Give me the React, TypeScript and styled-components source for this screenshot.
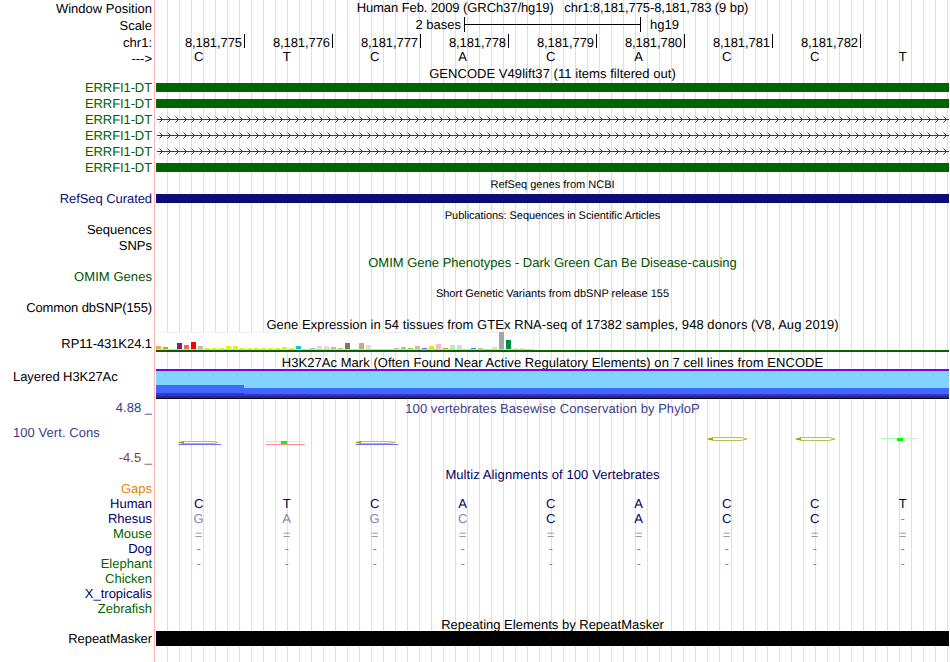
import React from "react";
import styled, { createGlobalStyle } from "styled-components";

const GlobalStyle = createGlobalStyle`
  * { box-sizing: border-box; }
  body { margin: 0; background: #fff; }
`;

const INK = "#000000";
const GREEN = "#006400";
const NAVY = "#0c0c78";
const DEEP = "#000064";
const SLATE = "#3c3c8c";

const Browser = styled.main`
  width: 949px;
  height: 662px;
  overflow: hidden;
  display: grid;
  grid-template-columns: 154px 795px;
  font: 13px/15px "Liberation Sans", Arial, sans-serif;
  color: ${INK};
  text-rendering: geometricPrecision;
`;

const Labels = styled.div`
  display: flex;
  flex-direction: column;
`;

const Tracks = styled.div`
  display: flex;
  flex-direction: column;
  border-left: 1px solid #ffb4b4;
  padding-left: 1px;
  background: repeating-linear-gradient(to right, #dcdcfa 0 1px, transparent 1px 12px) 12px 0 no-repeat;
`;

const Label = styled.div<{ $h: number; $pad?: number; $color?: string; $left?: boolean; $ls?: number }>`
  flex: none;
  height: ${(p) => p.$h}px;
  padding: ${(p) => p.$pad ?? 0}px 2px 0 13px;
  text-align: ${(p) => (p.$left ? "left" : "right")};
  color: ${(p) => p.$color ?? INK};
  letter-spacing: ${(p) => p.$ls ?? 0}px;
  white-space: pre;
`;

const Row = styled.div<{ $h: number; $pad?: number }>`
  flex: none;
  height: ${(p) => p.$h}px;
  padding-top: ${(p) => p.$pad ?? 0}px;
`;

const Title = styled(Row)<{ $color?: string; $ls?: number; $small?: boolean }>`
  text-align: center;
  white-space: pre;
  color: ${(p) => p.$color ?? INK};
  letter-spacing: ${(p) => p.$ls ?? 0}px;
  font-size: ${(p) => (p.$small ? 11 : 13)}px;
`;

const ScaleRow = styled(Row)`
  display: flex;
`;

const ScaleStart = styled.span`
  width: 305px;
  text-align: right;
  margin-right: 3px;
`;

const ScaleBar = styled.span`
  width: 177px;
  height: 15px;
  border: solid #000;
  border-width: 0 1px;
  background: linear-gradient(#000, #000) 0 7px / 100% 1px no-repeat;
  margin-right: 9px;
`;

const Ruler = styled(Row)`
  display: flex;
`;

const Tick = styled.span`
  flex: none;
  width: 88px;
  height: 14px;
  padding-right: 2px;
  text-align: right;
  line-height: 17px;
  letter-spacing: -0.08px;
  border-right: 1px solid #000;
  &:first-child { width: 89px; }
`;

const Bases = styled(Row)<{ $color?: string }>`
  display: grid;
  grid-template-columns: repeat(9, 88px);
  margin-left: -1.4px;
  text-align: center;
  color: ${(p) => p.$color ?? INK};
`;

const Base = styled.span<{ $dim?: boolean }>`
  color: ${(p) => (p.$dim ? "#8282b4" : "inherit")};
`;

const Block = styled.div<{ $h: number; $color: string }>`
  height: ${(p) => p.$h}px;
  background: ${(p) => p.$color};
`;

const Drawing = styled.svg`
  display: block;
  flex: none;
`;

const Expression = styled.div`
  flex: none;
  width: 378px;
  height: 18px;
  padding-right: 1px;
  display: grid;
  grid-template-columns: repeat(54, 5px);
  column-gap: 2px;
  align-items: end;
  background: #fff;
  border: solid #f0f0f0;
  border-width: 1px 1px 1px 0;
  border-bottom-color: #d2d2d2;
`;

const Tissue = styled.span<{ $h: number; $color: string }>`
  height: ${(p) => p.$h}px;
  margin-top: -1px;
  background: ${(p) => p.$color};
`;

const TAN = "#cdb79e";
const YEL = "#eeee00";
const PNK = "#eed5d2";
const NONE: [number, string] = [0, "#fff"];
const tissues: [number, string][] = [
  [3, "#ffa54f"], [2, "#ee9a00"], NONE, [6, "#8b1c62"], [4, "#ee6a50"], [7, "#ff0000"], [3, TAN],
  [1, YEL], [1, YEL], [1, YEL], [3, YEL], [3, YEL], [1, YEL], [1, YEL], [1, YEL], [1, YEL], [1, YEL], [1, YEL],
  [2, YEL], [1, YEL], [3, "#00cdcd"], NONE, [1, "#9ac0cd"], [3, PNK], [3, PNK], [2, TAN], [1, TAN],
  [6, "#8b7355"], NONE, [6, "#cdaa7d"], [4, PNK], NONE, NONE, NONE, [1, TAN], [2, TAN], [1, "#9acd32"],
  [3, TAN], [1, "#7a67ee"], [3, "#ffd700"], [5, "#ffb6c1"], [1, "#cd9b1d"], [4, "#b4eeb4"], [4, "#d9d9d9"],
  NONE, [1, "#1e90ff"], [1, TAN], NONE, [2, "#ffd39b"], [17, "#a6a6a6"], [9, "#008b45"], [1, PNK], [1, PNK], NONE,
];

const Arrows = ({ id }: { id: string }) => (
  <Drawing width="793" height="16" shapeRendering="crispEdges">
    <defs>
      <pattern id={id} x="3" width="8" height="16" patternUnits="userSpaceOnUse">
        <path d="M1 6h1v1h-1zM2 7h1v1h-1zM1 10h1v1h-1zM2 9h1v1h-1z" fill={GREEN} />
        <path d="M0 5h1v1h-1zM0 11h1v1h-1z" fill="#78aa78" />
      </pattern>
    </defs>
    <rect x="1" y="8" width="792" height="1" fill={GREEN} />
    <rect width="793" height="16" fill={`url(#${id})`} />
  </Drawing>
);

const FlatC = ({ x, y, half = 1.5 }: { x: number; y: number; half?: number }) => (
  <g>
    <path
      d={`M${x + 40} ${y}L${x + 34} ${y - half}H${x + 7}L${x + 1} ${y}L${x + 7} ${y + half}H${x + 34}L${x + 40} ${y}`}
      fill="#fff"
      stroke="#b4b43c"
      strokeWidth=".9"
    />
    <path d={`M${x} ${y}l6-1.6v3.2z`} fill="#a0a000" />
  </g>
);

const Conservation = () => (
  <Drawing width="793" height="52">
    <FlatC x={22} y={27.5} half={1} />
    <path d="M22.5 29.5h42.5" stroke="#6e6eff" />
    <FlatC x={199} y={27.5} half={1} />
    <path d="M199.5 29.5h42.5" stroke="#6e6eff" />
    <path d="M110 26.5h37" stroke="#b4ffb4" />
    <path d="M110 29.5h39" stroke="#ff8c8c" />
    <rect x="125" y="26" width="6" height="3" fill="#00ff00" />
    <FlatC x={551} y={24} />
    <FlatC x={639} y={24} />
    <path d="M725 23.5h37" stroke="#b4ffb4" />
    <rect x="741" y="23" width="6" height="3" fill="#00ff00" />
  </Drawing>
);

const Acetylation = () => (
  <Drawing width="793" height="30" shapeRendering="crispEdges">
    <rect width="793" height="30" fill="#80d4ff" />
    <rect width="793" height="2" fill="#7d00f0" />
    <path d="M0 16h88v3h705v6H0z" fill="#4169ff" />
    <path d="M0 24h88v1h705v2H0z" fill="#3c32d2" />
    <rect y="27" width="793" height="2" fill="#1e289b" />
    <rect y="29" width="793" height="1" fill="#000014" />
  </Drawing>
);

const positions = [775, 776, 777, 778, 779, 780, 781, 782].map((n) => `8,181,${n}`);
const species: [string, string][] = [
  ["Gaps", "#e68200"], ["Human", DEEP], ["Rhesus", DEEP], ["Mouse", GREEN], ["Dog", DEEP],
  ["Elephant", GREEN], ["Chicken", GREEN], ["X_tropicalis", DEEP], ["Zebrafish", GREEN],
];
const alignment = [
  { bases: "CTCACACCT", dim: 0 },
  { bases: "GAGCCACC-", dim: 4, lastDim: true },
  { bases: "=========", dim: 9, pad: 1 },
  { bases: "---------", dim: 9 },
  { bases: "---------", dim: 9 },
];

export default function App() {
  return (
    <>
      <GlobalStyle />
      <Browser>
        <Labels>
          <Label $h={16} $pad={1}>Window Position</Label>
          <Label $h={18} $pad={2}>Scale</Label>
          <Label $h={16} $pad={1}>chr1:</Label>
          <Label $h={29} $pad={1}>---&gt;</Label>
          {[0, 1, 2, 3, 4, 5].map((i) => (
            <Label key={i} $h={16} $pad={1} $color={GREEN} $ls={-0.1}>ERRFI1-DT</Label>
          ))}
          <Label $h={31} $pad={16} $color={NAVY} $ls={-0.07}>RefSeq Curated</Label>
          <Label $h={32} $pad={16}>Sequences</Label>
          <Label $h={16}>SNPs</Label>
          <Label $h={31} $pad={15} $color="#005000" $ls={0.06}>OMIM Genes</Label>
          <Label $h={31} $pad={15} $ls={-0.12}>Common dbSNP(155)</Label>
          <Label $h={40} $pad={20} $ls={-0.07}>RP11-431K24.1</Label>
          <Label $h={44} $pad={13} $left $ls={-0.06}>Layered H3K27Ac</Label>
          <Label $h={25} $color={SLATE}>4.88 _</Label>
          <Label $h={25} $color={SLATE} $left $ls={0.06}>100 Vert. Cons</Label>
          <Label $h={31} $color="#8c3c3c">-4.5 _</Label>
          {species.map(([name, color]) => (
            <Label key={name} $h={15} $color={color}>{name}</Label>
          ))}
          <Label $h={46} $pad={15} $ls={-0.07}>RepeatMasker</Label>
        </Labels>
        <Tracks>
          <Title $h={16} $ls={-0.08}>Human Feb. 2009 (GRCh37/hg19)   chr1:8,181,775-8,181,783 (9 bp)</Title>
          <ScaleRow $h={18} $pad={1}>
            <ScaleStart>2 bases</ScaleStart>
            <ScaleBar />
            <span>hg19</span>
          </ScaleRow>
          <Ruler $h={15}>
            {positions.map((p) => <Tick key={p}>{p}</Tick>)}
          </Ruler>
          <Bases $h={17}>
            {[..."CTCACACCT"].map((b, i) => <Base key={i}>{b}</Base>)}
          </Bases>
          <Title $h={17} $ls={0.05}>GENCODE V49lift37 (11 items filtered out)</Title>
          <Row $h={16}><Block $h={9} $color={GREEN} /></Row>
          <Row $h={12}><Block $h={9} $color={GREEN} /></Row>
          <Arrows id="a1" />
          <Arrows id="a2" />
          <Arrows id="a3" />
          <Row $h={15} $pad={4}><Block $h={9} $color={GREEN} /></Row>
          <Title $h={20} $pad={4} $small>RefSeq genes from NCBI</Title>
          <Row $h={14}><Block $h={9} $color={NAVY} /></Row>
          <Title $h={47} $pad={1} $small $ls={-0.05}>Publications: Sequences in Scientific Articles</Title>
          <Title $h={31} $color="#005000">OMIM Gene Phenotypes - Dark Green Can Be Disease-causing</Title>
          <Title $h={31} $pad={1} $small>Short Genetic Variants from dbSNP release 155</Title>
          <Title $h={15} $ls={0.055}>Gene Expression in 54 tissues from GTEx RNA-seq of 17382 samples, 948 donors (V8, Aug 2019)</Title>
          <Expression>
            {tissues.map(([h, c], i) => <Tissue key={i} $h={h} $color={c} />)}
          </Expression>
          <Row $h={5}><Block $h={2} $color={GREEN} /></Row>
          <Title $h={14} $ls={0.045}>H3K27Ac Mark (Often Found Near Active Regulatory Elements) on 7 cell lines from ENCODE</Title>
          <Acetylation />
          <Title $h={16} $pad={2} $color={SLATE} $ls={0.05}>100 vertebrates Basewise Conservation by PhyloP</Title>
          <Conservation />
          <Title $h={29} $color={DEEP} $ls={0.09}>Multiz Alignments of 100 Vertebrates</Title>
          {alignment.map((row, r) => (
            <Bases key={r} $h={15} $pad={row.pad} $color={DEEP}>
              {[...row.bases].map((b, i) => (
                <Base key={i} $dim={i < row.dim || (row.lastDim && i === 8)}>{b}</Base>
              ))}
            </Bases>
          ))}
          <Title $h={60} $pad={46}>Repeating Elements by RepeatMasker</Title>
          <Block $h={15} $color="#000" />
        </Tracks>
      </Browser>
    </>
  );
}
